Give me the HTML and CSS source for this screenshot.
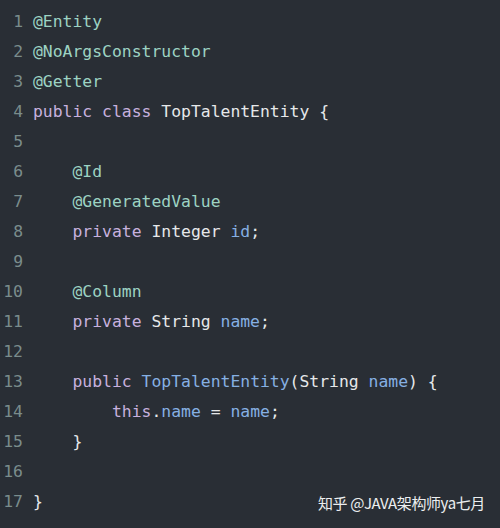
FILE: index.html
```html
<!DOCTYPE html>
<html>
<head>
<meta charset="utf-8">
<link rel="stylesheet" href="styles.css">
</head>
<body>
<div class="editor">
  <div class="line"><span class="num">1</span><span class="code"><span class="an">@Entity</span></span></div>
  <div class="line"><span class="num">2</span><span class="code"><span class="an">@NoArgsConstructor</span></span></div>
  <div class="line"><span class="num">3</span><span class="code"><span class="an">@Getter</span></span></div>
  <div class="line"><span class="num">4</span><span class="code"><span class="kw">public</span> <span class="kw">class</span> TopTalentEntity {</span></div>
  <div class="line"><span class="num">5</span><span class="code"></span></div>
  <div class="line"><span class="num">6</span><span class="code">    <span class="an">@Id</span></span></div>
  <div class="line"><span class="num">7</span><span class="code">    <span class="an">@GeneratedValue</span></span></div>
  <div class="line"><span class="num">8</span><span class="code">    <span class="kw">private</span> Integer <span class="id">id</span>;</span></div>
  <div class="line"><span class="num">9</span><span class="code"></span></div>
  <div class="line"><span class="num">10</span><span class="code">    <span class="an">@Column</span></span></div>
  <div class="line"><span class="num">11</span><span class="code">    <span class="kw">private</span> String <span class="id">name</span>;</span></div>
  <div class="line"><span class="num">12</span><span class="code"></span></div>
  <div class="line"><span class="num">13</span><span class="code">    <span class="kw">public</span> <span class="id">TopTalentEntity</span>(String <span class="id">name</span>) {</span></div>
  <div class="line"><span class="num">14</span><span class="code">        <span class="kw">this</span>.<span class="id">name</span> = <span class="id">name</span>;</span></div>
  <div class="line"><span class="num">15</span><span class="code">    }</span></div>
  <div class="line"><span class="num">16</span><span class="code"></span></div>
  <div class="line"><span class="num">17</span><span class="code">}</span></div>
</div>
<div class="watermark">知乎 @JAVA架构师ya七月</div>
</body>
</html>
```
FILE: styles.css
```css
html, body {
  margin: 0;
  padding: 0;
  background: #292e35;
  width: 500px;
  height: 528px;
  overflow: hidden;
}
.editor {
  padding-top: 7px;
  font-family: "DejaVu Sans Mono", monospace;
  font-size: 16.4px;
  color: #e6e8ea;
}
.line {
  display: flex;
  height: 30px;
  line-height: 30px;
  white-space: pre;
}
.num {
  width: 23px;
  text-align: right;
  color: #7a8c8c;
  flex: none;
}
.code {
  margin-left: 10px;
}
.an { color: #9dd3c3; }
.kw { color: #c7b1de; }
.id { color: #86b0e3; }
.watermark {
  position: absolute;
  left: 318px;
  top: 492px;
  font-family: "Noto Sans CJK SC", sans-serif;
  font-size: 15px;
  line-height: 22px;
  color: #eceef0;
  letter-spacing: -0.4px;
}
```
